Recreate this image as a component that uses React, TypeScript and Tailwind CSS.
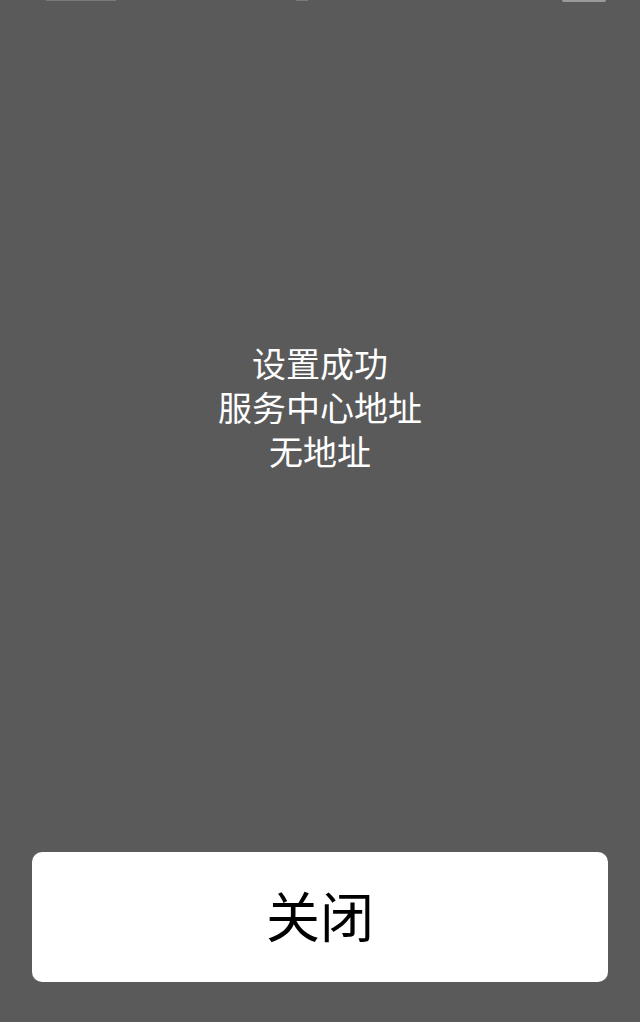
export default function App() {
  return (
    <div
      className="flex h-[1022px] w-[640px] flex-col bg-[#5a5a5a]"
      style={{ fontFamily: '"Noto Sans CJK SC", "Noto Sans", sans-serif' }}
    >
      {/* status bar, scrolled almost entirely out of view */}
      <div className="flex h-[2px] items-start px-[46px]">
        <div className="h-px w-[70px] bg-[#7a7a7a]" />
        <div className="ml-[180px] h-px w-[12px] bg-[#7a7a7a]" />
        <div className="ml-auto mr-[-12px] h-[2px] w-[44px] rounded-b-sm bg-[#9a9a9a]" />
      </div>

      <div className="flex h-[339px] shrink-0" />

      <p className="text-center text-[34px] leading-[44px] text-white">
        设置成功
        <br />
        服务中心地址
        <br />
        无地址
      </p>

      <div className="flex-1" />

      <div className="px-[32px] pb-[40px]">
        <button className="flex h-[130px] w-full items-center justify-center rounded-[10px] bg-white pb-[6px] text-[54px] text-black">
          关闭
        </button>
      </div>
    </div>
  );
}
